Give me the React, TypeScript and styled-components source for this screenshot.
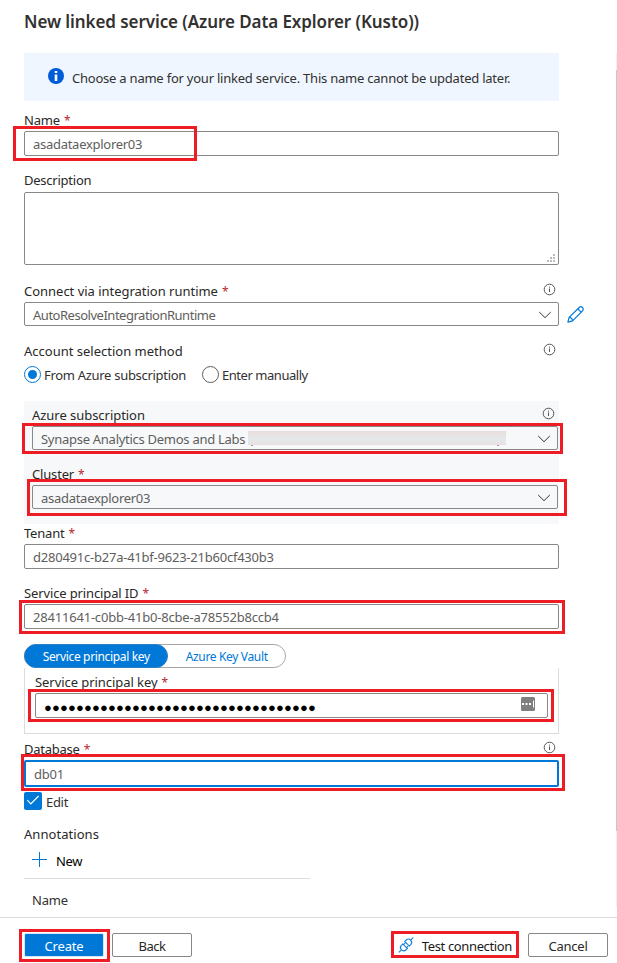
import React from 'react';
import styled, { createGlobalStyle, css } from 'styled-components';

const blue = '#0078d7';
const red = '#ee1c25';

const GlobalStyle = createGlobalStyle`
  * { box-sizing: border-box; }
  body { margin: 0; background: #fff; overflow: hidden; }
`;

const Page = styled.div`
  display: flex;
  flex-direction: column;
  width: 617px;
  height: 963px;
  overflow: hidden;
  font: 13px/18px 'Noto Sans', 'Open Sans', sans-serif;
  color: #323130;
  white-space: nowrap;
`;

const Header = styled.header`
  flex: none;
  height: 53px;
  padding: 9px 0 0 24px;
`;

const Title = styled.h1`
  margin: 0;
  font-size: 17px;
  line-height: 26px;
  font-weight: 600;
  letter-spacing: -0.078px;
`;

const Body = styled.main`
  flex: none;
  display: flex;
  justify-content: space-between;
  height: 864px;
`;

const Form = styled.form`
  display: flex;
  flex-direction: column;
  width: 535px;
  margin-left: 24px;
`;

const ScrollTrack = styled.div`
  width: 1px;
  height: 854px;
  padding-top: 17px;
  background: #f0f0f0;
`;

const ScrollThumb = styled.div`
  height: 761px;
  background: #c8c8c8;
`;

const Banner = styled.div`
  display: flex;
  align-items: flex-start;
  flex: none;
  height: 48px;
  padding: 15px 24px 0;
  gap: 8px;
  background: #eff6ff;
  svg { flex: none; }
`;

const Text = styled.span<{ $track?: number; $drop?: number }>`
  letter-spacing: ${p => p.$track ?? 0}px;
  padding-top: ${p => p.$drop ?? 0}px;
`;

const Field = styled.div<{ $gap: number }>`
  display: flex;
  flex-direction: column;
  flex: none;
  margin-top: ${p => p.$gap}px;
`;

const LabelRow = styled.div<{ $tall?: boolean }>`
  display: flex;
  justify-content: space-between;
  height: ${p => (p.$tall ? 21 : 20)}px;
  padding-right: 3px;
  color: #292827;
  svg { margin-top: 1px; }
`;

const Star = styled.span`
  color: #b3282d;
  margin-left: 4px;
  font-size: 12px;
`;

const Control = styled.div`
  position: relative;
  display: flex;
  align-items: center;
  gap: 8px;
  > svg { flex: none; }
`;

const Box = styled.div<{ $height: number; $focus?: boolean }>`
  display: flex;
  flex: none;
  justify-content: space-between;
  align-items: center;
  width: 100%;
  height: ${p => p.$height}px;
  padding: 1px 7px 0 8px;
  border: 1px solid #8a8886;
  border-radius: 2px;
  color: #605e5c;
  ${p => p.$focus && css`
    padding-left: 8px;
    border: 2px solid ${blue};
  `}
`;

const TextArea = styled.div`
  display: flex;
  justify-content: flex-end;
  align-items: flex-end;
  height: 73px;
  padding: 2px 3px;
  border: 1px solid #8a8886;
  border-radius: 2px;
`;

const Highlight = styled.span<{ $inset: string }>`
  position: absolute;
  inset: ${p => p.$inset};
  border: 3px solid ${red};
  pointer-events: none;
`;

const RadioRow = styled.div`
  display: flex;
  flex: none;
  gap: 16px;
  height: 18px;
  margin-top: 4px;
`;

const RadioOption = styled.label`
  display: flex;
  gap: 3px;
`;

const Radio = styled.span<{ $on?: boolean }>`
  display: flex;
  align-items: center;
  justify-content: center;
  width: 17px;
  height: 17px;
  border: 1px solid ${p => (p.$on ? blue : '#605e5c')};
  border-radius: 50%;
  &::after {
    content: '';
    width: 9px;
    height: 9px;
    border-radius: 50%;
    background: ${p => (p.$on ? blue : 'transparent')};
  }
`;

const Group = styled.section`
  flex: none;
  height: 123px;
  padding: 0 1px 0 8px;
  background: #f7f8fa;
  display: flow-root;
`;

const Redacted = styled.span`
  flex: none;
  width: 258px;
  height: 14px;
  margin: -2px auto 0 3px;
  background: linear-gradient(#ecdcdd, #e4e7e8 45%, #e5e8e9 70%, #eadfe0);
  position: relative;
  &::before, &::after {
    content: '';
    position: absolute;
    top: 14px;
    left: 3px;
    width: 2px;
    height: 1px;
    background: #a09e9d;
  }
  &::after { left: 249px; }
`;

const Pivot = styled.div`
  display: flex;
  flex: none;
  width: 262px;
  height: 24px;
  margin-top: 15px;
  border: 1px solid #a6a6a6;
  border-radius: 12px;
  font-size: 12px;
`;

const PivotTab = styled.button<{ $on?: boolean }>`
  width: ${p => (p.$on ? 145 : 117)}px;
  margin: ${p => (p.$on ? '-1px 0 -1px -1px' : '0')};
  padding: 2px 0 0;
  border: ${p => (p.$on ? '1px solid #2f7fc2' : '0')};
  border-radius: 12px;
  background: ${p => (p.$on ? blue : 'transparent')};
  color: ${p => (p.$on ? '#fff' : blue)};
  font: inherit;
`;

const Panel = styled.section`
  flex: none;
  display: flow-root;
  height: 66px;
  padding: 0 10px;
  border: solid #dcdcdc;
  border-width: 0 1px 1px;
`;

const Secret = styled.span`
  color: #000;
  letter-spacing: 0.148px;
  margin: 1px 0 0 0;
`;

const CheckRow = styled.label`
  display: flex;
  flex: none;
  gap: 4px;
  height: 18px;
  margin-top: 5px;
`;

const CheckBox = styled.span`
  display: flex;
  width: 18px;
  height: 18px;
  border-radius: 2px;
  background: ${blue};
`;

const AddRow = styled.div`
  display: flex;
  gap: 9px;
  width: 286px;
  height: 34px;
  padding: 7px 0 0 8px;
  border-bottom: 1px solid #dcdcdc;
  color: #000;
`;

const ColumnHead = styled.div`
  padding: 12px 0 0 8px;
`;

const Footer = styled.footer`
  display: flex;
  justify-content: space-between;
  flex: 1;
  padding: 15px 9px 0 24px;
  border-top: 1px solid #dcdcdc;
`;

const ButtonGroup = styled.div`
  display: flex;
  align-items: flex-start;
  gap: 8px;
`;

const Button = styled.button<{ $primary?: boolean }>`
  width: 80px;
  height: 24px;
  padding: 1px 0 0;
  font: inherit;
  color: ${p => (p.$primary ? '#fff' : '#292827')};
  background: ${p => (p.$primary ? blue : '#fff')};
  border: 1px solid ${p => (p.$primary ? '#d5e6f5' : '#8a8886')};
  border-radius: 2px;
`;

const TestLink = styled.div`
  display: flex;
  gap: 8px;
  height: 24px;
  padding: 4px 8px 0 0;
  color: #1b1a19;
`;

const InfoIcon = () => (
  <svg width="13" height="13" viewBox="0 0 13 13" fill="none" stroke="#555" strokeWidth="1">
    <circle cx="6.5" cy="6.5" r="5.3" />
    <path d="M6.5 5.5V9" />
    <path d="M6.5 3.6v1" />
  </svg>
);

const Chevron = () => (
  <svg width="13" height="8" viewBox="0 0 13 8" fill="none" stroke="#333" strokeWidth="1">
    <path d="M1.2 1l5.8 5.7L12.8 1" />
  </svg>
);

const Pencil = () => (
  <svg width="17" height="17" viewBox="0 0 17 17" fill="none" stroke={blue} strokeWidth="1.2" strokeLinejoin="round">
    <path d="M.9 16.1l1.2-4.7L12.2 1.5a2.3 2.3 0 0 1 3.3 3.3L5.5 14.9z" />
    <path d="M10.8 2.9l3.3 3.3M2.1 11.4c1.9-.1 3.5 1.5 3.4 3.5" />
  </svg>
);

const Plug = () => (
  <svg width="16" height="16" viewBox="0 0 16 17" fill="none" stroke="#1683d8" strokeWidth="1.2">
    <path d="M.4 16.4l2.7-2.8M12.9 3.4L15.7.6" />
    <path d="M3.2 13.7c-1.4-1.5-1.5-3.4-.2-4.7l1.6-1.6 4.8 4.9-1.6 1.5c-1.3 1.3-3.2 1.3-4.6-.1z" />
    <path d="M12.9 3.3c-1.4-1.4-3.3-1.4-4.6-.1L6.7 4.8l4.8 4.8L13.1 8c1.3-1.3 1.2-3.2-.2-4.7z" />
    <path d="M5.4 8.2l1.8-1.8M8.5 11.4l1.8-1.8" />
  </svg>
);

const InfoBadge = () => (
  <svg width="16" height="16" viewBox="0 0 16 16">
    <circle cx="8" cy="8" r="8" fill="#015cda" />
    <path d="M6.7 3h2.6v2.1H6.7zM6.7 6.5h2.6V13H6.7z" fill="#fff" />
  </svg>
);

const ResizeGrip = () => (
  <svg width="8" height="8" viewBox="0 0 8 8" fill="#bdbdbd">
    <path d="M6 0h2v2H6zM3 3h2v2H3zM6 3h2v2H6zM0 6h2v2H0zM3 6h2v2H3zM6 6h2v2H6z" />
  </svg>
);

const KeyBadge = styled.svg`
  flex: none;
  margin: -4px 5px 0 0;
`;

type LabelProps = { text: string; track?: number; required?: boolean; info?: boolean; tall?: boolean };

const Label = ({ text, track, required, info, tall }: LabelProps) => (
  <LabelRow $tall={tall}>
    <span>
      <Text $track={track}>{text}</Text>
      {required && <Star>*</Star>}
    </span>
    {info && <InfoIcon />}
  </LabelRow>
);

export default function App() {
  return (
    <Page>
      <GlobalStyle />
      <Header>
        <Title>New linked service (Azure Data Explorer (Kusto))</Title>
      </Header>
      <Body>
        <Form>
          <Banner>
            <InfoBadge />
            <Text $track={-0.225} $drop={1}>
              Choose a name for your linked service. This name cannot be updated later.
            </Text>
          </Banner>

          <Field $gap={10}>
            <Label text="Name" track={-0.16} required />
            <Control>
              <Box $height={25}><Text $track={-0.28}>asadataexplorer03</Text></Box>
              <Highlight $inset="-5px 362px -5px -11px" />
            </Control>
          </Field>

          <Field $gap={15}>
            <Label text="Description" track={-0.24} tall />
            <TextArea><ResizeGrip /></TextArea>
          </Field>

          <Field $gap={17}>
            <Label text="Connect via integration runtime" track={-0.02} required info />
            <Control>
              <Box $height={24}>
                <Text $track={-0.48}>AutoResolveIntegrationRuntime</Text>
                <Chevron />
              </Box>
              <Pencil />
            </Control>
          </Field>

          <Field $gap={16}>
            <Label text="Account selection method" info />
            <RadioRow>
              <RadioOption><Radio $on /><Text $track={-0.3}>From Azure subscription</Text></RadioOption>
              <RadioOption><Radio /><Text $track={-0.46}>Enter manually</Text></RadioOption>
            </RadioRow>
          </Field>

          <Field $gap={17}>
            <Group>
              <Field $gap={5}>
                <Label text="Azure subscription" track={-0.04} info />
                <Control>
                  <Box $height={24}>
                    <Text $track={-0.275}>Synapse Analytics Demos and Labs</Text>
                    <Redacted />
                    <Chevron />
                  </Box>
                  <Highlight $inset="-3px -5px -4px -10px" />
                </Control>
              </Field>
              <Field $gap={15}>
                <Label text="Cluster" track={-0.17} required />
                <Control>
                  <Box $height={24}>
                    <Text $track={-0.28}>asadataexplorer03</Text>
                    <Chevron />
                  </Box>
                  <Highlight $inset="-6px -9px -7px -5px" />
                </Control>
              </Field>
            </Group>
          </Field>

          <Field $gap={0}>
            <Label text="Tenant" track={-0.2} required />
            <Box $height={25}><Text $track={-0.23}>d280491c-b27a-41bf-9623-21b60cf430b3</Text></Box>
          </Field>

          <Field $gap={15}>
            <Label text="Service principal ID" track={-0.13} required />
            <Control>
              <Box $height={25}><Text $track={-0.2}>28411641-c0bb-41b0-8cbe-a78552b8ccb4</Text></Box>
              <Highlight $inset="-4px -6px -5px -5px" />
            </Control>
          </Field>

          <Pivot>
            <PivotTab type="button" $on><Text $track={-0.34}>Service principal key</Text></PivotTab>
            <PivotTab type="button"><Text $track={-0.34}>Azure Key Vault</Text></PivotTab>
          </Pivot>
          <Panel>
            <Field $gap={5}>
              <Label text="Service principal key" track={-0.06} required />
              <Control>
                <Box $height={25}>
                  <Secret>{'●'.repeat(34)}</Secret>
                  <KeyBadge width="14" height="14" viewBox="0 0 14 14">
                    <rect width="14" height="14" rx="1.5" fill="#7f7f7f" />
                    <path d="M1 6h2v2H1zM4.5 6h2v2h-2zM8 6h2v2H8zM12 3.5h1v7h-1z" fill="#fff" />
                  </KeyBadge>
                </Box>
                <Highlight $inset="-4px -6px -4px -7px" />
              </Control>
            </Field>
          </Panel>

          <Field $gap={6}>
            <Label text="Database" track={-0.25} required info />
            <Control>
              <Box $height={27} $focus><Text $track={-0.2}>db01</Text></Box>
              <Highlight $inset="-6px -6px -4px -3px" />
            </Control>
          </Field>

          <CheckRow>
            <CheckBox>
              <svg width="18" height="18" viewBox="0 0 18 18" fill="none" stroke="#fff" strokeWidth="1.2">
                <path d="M3.3 8.2l3.5 3.6L14.6 4" />
              </svg>
            </CheckBox>
            <Text $track={-0.3} $drop={1}>Edit</Text>
          </CheckRow>

          <Field $gap={15}>
            <Label text="Annotations" track={0.05} />
            <AddRow>
              <svg width="15" height="15" viewBox="0 0 15 15" stroke={blue} strokeWidth="1">
                <path d="M7.5 0v15M0 7.5h15" />
              </svg>
              <Text $track={-0.38}>New</Text>
            </AddRow>
            <ColumnHead><Text $track={-0.16}>Name</Text></ColumnHead>
          </Field>
        </Form>
        <ScrollTrack><ScrollThumb /></ScrollTrack>
      </Body>
      <Footer>
        <ButtonGroup>
          <Control as="span">
            <Button $primary><Text $track={-0.16}>Create</Text></Button>
            <Highlight $inset="-4px -6px -5px -5px" />
          </Control>
          <Button><Text $track={-0.45}>Back</Text></Button>
        </ButtonGroup>
        <ButtonGroup>
          <Control as="span">
            <TestLink><Plug /><Text $track={-0.36}>Test connection</Text></TestLink>
            <Highlight $inset="-2px 1px -1px -7px" />
          </Control>
          <Button><Text $track={-0.24}>Cancel</Text></Button>
        </ButtonGroup>
      </Footer>
    </Page>
  );
}
